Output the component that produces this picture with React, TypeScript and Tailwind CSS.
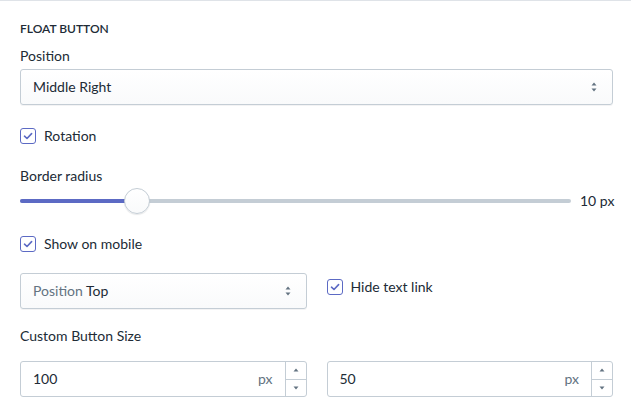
import React from "react";

const font = { fontFamily: 'Lato, "Noto Sans", sans-serif' };

function Check({ label }: { label: string }) {
  return (
    <div className="flex h-5 items-center gap-2">
      <div className="flex h-4 w-4 items-center justify-center rounded-[3px] border border-[#5c6ac4] bg-white">
        <svg width="12" height="12" viewBox="0 0 12 12">
          <path d="M2.5 6.2 L5 8.5 L9.6 3.6" fill="none" stroke="#5c6ac4" strokeWidth="1.6" strokeLinecap="round" strokeLinejoin="round" />
        </svg>
      </div>
      <span className="text-sm leading-5 text-[#212b36]">{label}</span>
    </div>
  );
}

function SelectArrows() {
  return (
    <svg width="6" height="10" viewBox="0 0 6 10" className="shrink-0">
      <path d="M0.5 3.5 L3 0.5 L5.5 3.5 Z" fill="#637381" />
      <path d="M0.5 6.5 L3 9.5 L5.5 6.5 Z" fill="#637381" />
    </svg>
  );
}

function Select({ children }: { children: React.ReactNode }) {
  return (
    <div className="flex h-9 items-center justify-between rounded-[3px] border border-[#c4cdd5] bg-gradient-to-b from-white to-[#f9fafb] pl-3 pr-[15px] shadow-[0_1px_0_rgba(22,29,37,0.05)]">
      <span className="text-sm leading-5 text-[#212b36]">{children}</span>
      <SelectArrows />
    </div>
  );
}

function NumberInput({ value }: { value: string }) {
  return (
    <div className="flex h-9 rounded-[3px] border border-[#c4cdd5] bg-white">
      <div className="flex flex-1 items-center pl-3 pr-3">
        <span className="flex-1 text-sm leading-5 text-[#212b36]">{value}</span>
        <span className="text-sm leading-5 text-[#637381]">px</span>
      </div>
      <div className="flex w-[21px] flex-col border-l border-[#c4cdd5]">
        <div className="flex flex-1 items-center justify-center border-b border-[#c4cdd5]">
          <svg width="6" height="4" viewBox="0 0 6 4"><path d="M0.5 3.5 L3 0.5 L5.5 3.5 Z" fill="#637381" /></svg>
        </div>
        <div className="flex flex-1 items-center justify-center">
          <svg width="6" height="4" viewBox="0 0 6 4"><path d="M0.5 0.5 L3 3.5 L5.5 0.5 Z" fill="#637381" /></svg>
        </div>
      </div>
    </div>
  );
}

export default function App() {
  return (
    <div className="h-[416px] w-[631px] overflow-hidden border-t border-[#dfe3e8] bg-white" style={font}>
      <div className="flex flex-col pl-5 pr-[18px] pt-5">
        <div className="h-4 text-xs font-semibold uppercase leading-4 text-[#212b36]">Float Button</div>
        <div className="mt-[9px] text-sm leading-5 text-[#212b36]">Position</div>
        <div className="mt-[3px]">
          <Select>Middle Right</Select>
        </div>
        <div className="mt-[21px]">
          <Check label="Rotation" />
        </div>
        <div className="mt-5 text-sm leading-5 text-[#212b36]">Border radius</div>
        <div className="mt-[2px] flex h-[26px] items-center">
          <div className="relative h-[26px] flex-1">
            <div className="absolute left-0 right-0 top-[11px] h-1 rounded-full bg-[#c4cdd5]" />
            <div className="absolute left-0 top-[11px] h-1 w-[110px] rounded-l-full bg-[#5c6ac4]" />
            <div className="absolute left-[104px] top-0 h-[26px] w-[26px] rounded-full border border-[#c4cdd5] bg-gradient-to-b from-white to-[#f9fafb] shadow-[0_1px_1px_rgba(22,29,37,0.1)]" />
          </div>
          <span className="ml-[9px] w-[33px] shrink-0 whitespace-nowrap text-sm leading-5 text-[#212b36]">10 px</span>
        </div>
        <div className="mt-5">
          <Check label="Show on mobile" />
        </div>
        <div className="mt-[19px] grid grid-cols-2 gap-5">
          <Select>
            <span className="text-[#637381]">Position</span> Top
          </Select>
          <div className="pt-[4px]">
            <Check label="Hide text link" />
          </div>
        </div>
        <div className="mt-[17px] text-sm leading-5 text-[#212b36]">Custom Button Size</div>
        <div className="mt-[15px] grid grid-cols-2 gap-5">
          <NumberInput value="100" />
          <NumberInput value="50" />
        </div>
      </div>
    </div>
  );
}
